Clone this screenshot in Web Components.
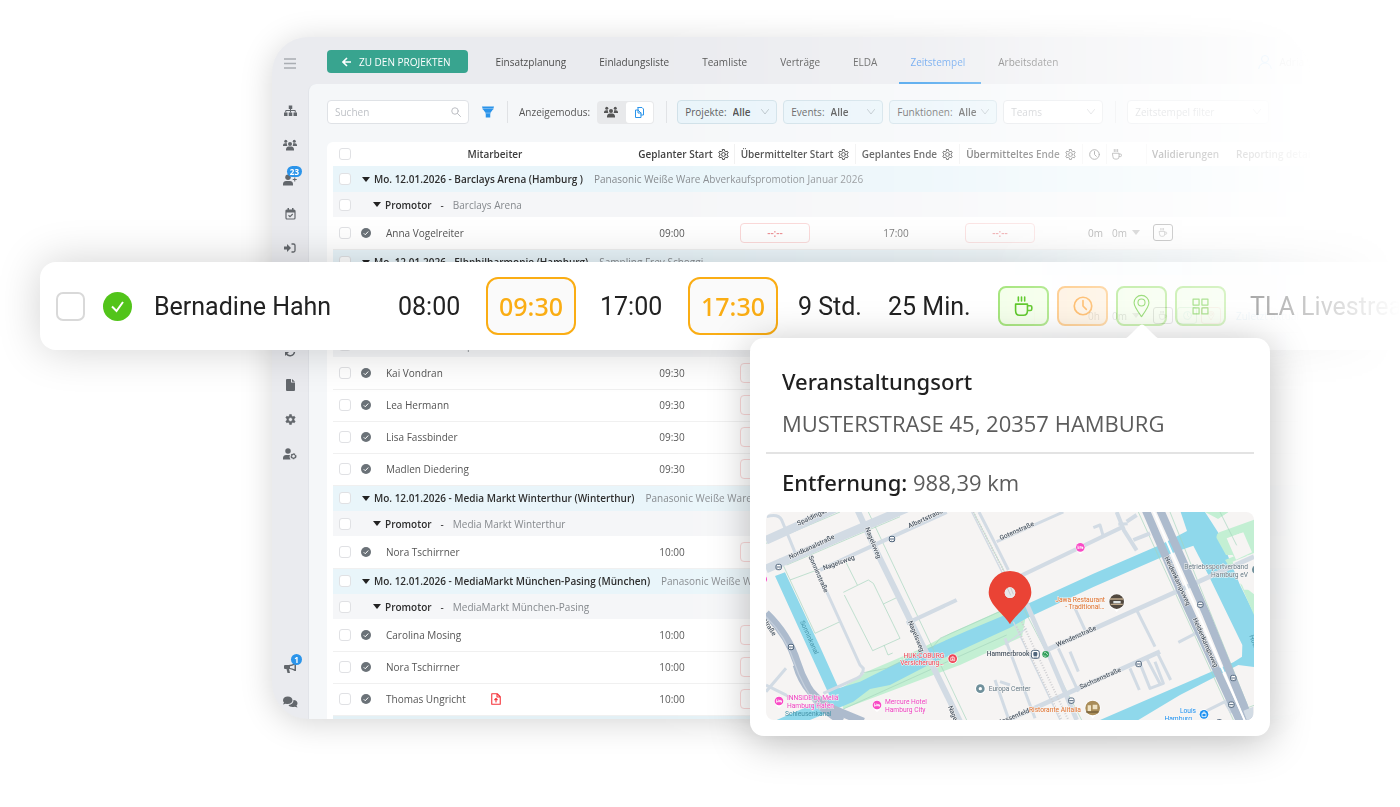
<!DOCTYPE html>
<html lang="de">
<head>
<meta charset="utf-8">
<title>Zeitstempel</title>
<style>
body{margin:0;background:#fff;font-family:"Open Sans","Noto Sans",sans-serif;font-size:10px;color:#555}
</style>
</head>
<body>
<app-stage>
  <app-window>
    <nav-rail slot="rail"></nav-rail>
    <tab-bar slot="tabs"></tab-bar>
    <filter-bar slot="filters"></filter-bar>
    <time-table></time-table>
  </app-window>
  <row-callout slot="callout"></row-callout>
  <place-popover slot="popover"><city-map></city-map></place-popover>
</app-stage>
<script>
const svg=(w,h,vb,body,extra='')=>`<svg width="${w}" height="${h}" viewBox="${vb}" aria-hidden="true" ${extra}>${body}</svg>`;
const line='fill="none" stroke="currentColor" stroke-linecap="round" stroke-linejoin="round"';
const gearTeeth='M10.3 2h3.4l.5 2.8 2 1.2 2.7-1 1.7 3-2.2 1.800v2.400l2.200 1.800-1.700 3-2.700-1-2 1.200-.5 2.800h-3.400l-.5-2.800-2-1.200-2.700 1-1.700-3 2.200-1.800V9.800L3.400 8l1.700-3 2.700 1 2-1.200z';
const I={
 menu:svg(12,11,'0 0 12 11','<path d="M0 1h12M0 5.500h12M0 10h12" stroke="#a9adb2" stroke-width="1.600"/>'),
 sitemap:svg(13,12,'0 0 26 24','<path d="M9.500 1h7v7h-7zM0 15h7v7H0zM9.500 15h7v7h-7zM19 15h7v7h-7z" fill="currentColor"/><path d="M13 7v8M3.500 15v-4h19v4" fill="none" stroke="currentColor" stroke-width="2"/>'),
 users:svg(14,12,'0 0 28 24','<g fill="currentColor"><circle cx="14" cy="10" r="4"/><circle cx="5.500" cy="4.500" r="3"/><circle cx="22.500" cy="4.500" r="3"/><path d="M6 23v-2c0-4 3-6 5-6h6c2 0 5 2 5 6v2zM0 13c0-3 2-4.500 4-4.500h4c-.5 2 0 4 1 5.500H0zM28 13c0-3-2-4.500-4-4.500h-4c.5 2 0 4-1 5.500h9z"/></g>'),
 userplus:svg(14,12,'0 0 28 24','<g fill="currentColor"><circle cx="10" cy="6.500" r="5.500"/><path d="M0 23v-3c0-4 3-6 6-6h8c3 0 6 2 6 6v3z"/></g><path d="M23.500 7v8M19.500 11h8" stroke="currentColor" stroke-width="2"/>'),
 cal:svg(11,12,'0 0 22 24','<rect x="2" y="4" width="18" height="18" rx="2" fill="none" stroke="currentColor" stroke-width="2.400"/><path d="M2 4h18v5H2zM5 0h3v5H5zM14 0h3v5h-3z" fill="currentColor"/><path d="M7 14.500l3 3 5.500-5.500" fill="none" stroke="currentColor" stroke-width="2.200"/>'),
 signin:svg(12,10,'0 0 24 20','<path d="M0 7h6V2l8 8-8 8v-5H0z" fill="currentColor"/><path d="M15 2h4q3 0 3 3v10q0 3-3 3h-4" fill="none" stroke="currentColor" stroke-width="2.600"/>'),
 sync:svg(12,12,'0 0 24 24','<path d="M3 10a9 9 0 0 1 16-4M21 14a9 9 0 0 1-16 4" fill="none" stroke="currentColor" stroke-width="3"/><path d="M22 2v8h-8zM2 22v-8h8z" fill="currentColor"/>'),
 file:svg(9,12,'0 0 18 24','<path d="M0 2q0-2 2-2h8v7h8v15q0 2-2 2H2q-2 0-2-2zM12 0l6 5.500h-6z" fill="currentColor"/>'),
 gear:svg(11,11,'2 1 20 20',`<path fill-rule="evenodd" d="${gearTeeth}M12 7.500a3.600 3.600 0 1 0 0 7.200 3.600 3.600 0 0 0 0-7.200z" fill="currentColor" stroke="currentColor"/>`),
 usergear:svg(14,12,'0 0 28 24','<g fill="currentColor"><circle cx="10" cy="6" r="5.500"/><path d="M0 23v-3c0-4 3-6 6-6h8l-1 4 2 5z"/></g><circle cx="21" cy="16.500" r="4.500" fill="none" stroke="currentColor" stroke-width="3" stroke-dasharray="3.200 1.500"/><circle cx="21" cy="16.500" r="4" fill="none" stroke="currentColor" stroke-width="2"/>'),
 horn:svg(13,12,'0 0 26 24','<path d="M0 8q0-2 2-2h7c5 0 9-2 12-4h3v16h-3c-3-2-6-4-11-4l2 8H7L5 14H2q-2 0-2-2z" fill="currentColor"/><path d="M12 8.500q5-.5 9-3v9q-4-2-9-2.500z" fill="#eaebef"/>'),
 chat:svg(15,12,'0 0 30 24','<path d="M9.500 1C15 1 19 4 19 8.500S15 16 9.500 16c-1.500 0-3 0-4-.5L0 17l2-4C.5 11.500 0 10 0 8.500 0 4 4 1 9.500 1z" fill="currentColor"/><path d="M21 8c5 .5 8 3 8 6.500 0 1.500-.5 3-2 4.500l2 4-5.500-1.500C17 23 12 21 11 18c6-.5 10-4 10-10z" fill="currentColor"/>'),
 arrow:svg(9,10,'0 0 18 20','<path d="M18 10H3M10 2l-8 8 8 8" fill="none" stroke="currentColor" stroke-width="3.200"/>'),
 search:svg(10,10,'0 0 20 20',`<g ${line} stroke-width="1.800"><circle cx="8" cy="8" r="6.500"/><path d="M13 13l6 6"/></g>`),
 funnel:svg(12,12,'0 0 24 24','<path d="M0 1h24l-1 3.500H1zM1.500 6h21L17 13.500H7zM7.500 15h9v8h-9z" fill="#2b94ea"/><path d="M1 4h22v3H1zM7 13h10v3H7z" fill="#2b94ea" opacity=".55"/>'),
 copy:svg(9,11,'0 0 18 22',`<g ${line} stroke-width="2"><path d="M6 1h8l3 3v12h-5M6 1v5M6 6H1v15h11v-9L6 6v6h6"/></g>`),
 down:svg(8,6,'0 0 16 12',`<path d="M1 1l7 9 7-9" ${line} stroke-width="1.600"/>`),
 gearo:svg(11,11,'2 1 20 20',`<g ${line} stroke-width="1.800"><path d="${gearTeeth}"/><circle cx="12" cy="11" r="3.500"/></g>`),
 clock:svg(11,11,'0 0 24 24',`<g ${line} stroke-width="2"><circle cx="12" cy="12" r="10.500"/><path d="M12 5.500V12l4 4"/></g>`,'class="fit"'),
 cup:svg(10,11,'0 0 24 26',`<g ${line} stroke-width="2"><path d="M2 10h15v8q0 6-5 6H7q-5 0-5-6zM17 12h4q1.500 0 1.500 1.500V16q0 2-2 2H17M5.500 1v5M9.500 1v5M13.500 1v5"/></g>`,'class="fit"'),
 pin:svg(10,13,'0 0 24 32',`<g ${line} stroke-width="1.500"><path d="M12 31C7 24 1.500 17 1.500 11.500a10.500 10.500 0 0 1 21 0C22.500 17 17 24 12 31z"/><circle cx="12" cy="11" r="5"/></g>`,'class="fit"'),
 grid:svg(10,10,'0 0 24 24',`<g ${line} stroke-width="1.700"><path d="M1.500 1.500h8.500v8.500H1.500zM14 1.500h8.500v8.500H14zM1.500 14h8.500v8.500H1.500zM14 14h8.500v8.500H14z"/></g>`,'class="fit"'),
 ok:svg(10,10,'0 0 20 20','<circle cx="10" cy="10" r="10" fill="#6b7278"/><path d="M5.500 10.500l3 3 6-6.500" fill="none" stroke="#fff" stroke-width="2"/>'),
 caret:svg(8,5,'0 0 8 5','<path d="M0 0h8L4 5z" fill="currentColor"/>'),
 doc:svg(10,12,'0 0 20 24',`<g ${line} style="stroke:#f5333a" stroke-width="2.200"><path d="M1.500 1.500h11l6 6v15h-17zM12 1.500v6.500h6.500M10 18v-6M7.500 13.500L10 11l2.500 2.500"/></g>`),
 user:svg(14,14,'0 0 28 28',`<g ${line} style="stroke:#6db9f2" stroke-width="2"><circle cx="14" cy="8" r="7"/><path d="M1.500 27c1-7 6-11 12.500-11s11.500 4 12.500 11"/></g>`)
};
const check=`input[type=checkbox]{appearance:none;box-sizing:border-box;width:12px;height:12px;margin:0;border:1px solid #e0e1e4;border-radius:3px;background:#fff;display:block}`;
const define=(name,html)=>customElements.define(name,class extends HTMLElement{
  connectedCallback(){
    if(this.shadowRoot)return;
    const t=document.createElement('template');
    t.innerHTML=html;
    this.attachShadow({mode:'open'}).append(t.content.cloneNode(true));
  }
});

define('app-stage',`<style>
:host{display:block;position:relative;min-height:100vh;overflow:hidden}
.fade{padding:37px 90px 60px 272px;-webkit-mask-image:linear-gradient(90deg,#000 0,#000 46%,rgba(0,0,0,.72) 66%,rgba(0,0,0,.46) 75%,rgba(0,0,0,.25) 85%,rgba(0,0,0,.08) 91%,transparent 94%);mask-image:linear-gradient(90deg,#000 0,#000 46%,rgba(0,0,0,.72) 66%,rgba(0,0,0,.46) 75%,rgba(0,0,0,.25) 85%,rgba(0,0,0,.08) 91%,transparent 94%)}
.over{position:absolute;top:202px;left:0;right:0}
.pop{position:absolute;top:338px;left:750px}
</style>
<div class="fade"><slot></slot></div>
<div class="over"><slot name="callout"></slot></div>
<div class="pop"><slot name="popover"></slot></div>`);

define('app-window',`<style>
:host{display:grid;grid-template-columns:36px minmax(0,1fr);border-radius:36px;overflow:hidden;background:#eaebef;box-shadow:0 4px 32px rgba(0,0,0,.17)}
.main{display:flex;flex-direction:column;min-width:0}
.panel{background:#f5f7f9;border-left:1px solid #e2e4e9;border-radius:8px 0 0 0;padding-left:18px}
</style>
<slot name="rail"></slot>
<div class="main"><slot name="tabs"></slot><div class="panel"><slot name="filters"></slot><slot></slot></div></div>`);

define('nav-rail',`<style>
:host{display:flex;flex-direction:column;color:#63676c}
a,button{position:relative;display:flex;align-items:center;justify-content:center;height:34px;color:inherit;border:0;padding:0;background:none;width:100%}
button{height:52px}
.top{margin-top:5px;display:flex;flex-direction:column;justify-content:space-between;min-height:377px}
.end{margin-top:auto}
b{position:absolute;right:6px;top:3px;height:11px;min-width:11px;box-sizing:border-box;padding:0 3px;border-radius:6px;background:#2b94ea;color:#fff;font:700 8px/11px "Open Sans",sans-serif;text-align:center}
</style>
<button aria-label="Menü">${I.menu}</button>
<div class="top">
<a href="#" aria-label="Struktur">${I.sitemap}</a><a href="#" aria-label="Teams">${I.users}</a><a href="#" aria-label="Bewerber">${I.userplus}<b>23</b></a><a href="#" aria-label="Kalender">${I.cal}</a><a href="#" aria-label="Check-in">${I.signin}</a><a href="#" aria-label="Dateien">${I.file}</a><a href="#" aria-label="Termine">${I.cal}</a><a href="#" aria-label="Abgleich">${I.sync}</a><a href="#" aria-label="Dokumente">${I.file}</a><a href="#" aria-label="Einstellungen">${I.gear}</a><a href="#" aria-label="Benutzer">${I.usergear}</a>
</div>
<div class="end"><a href="#" aria-label="News">${I.horn}<b>1</b></a><a href="#" aria-label="Chat">${I.chat}</a></div>`);

define('tab-bar',`<style>
:host{display:flex;align-items:stretch;height:47px;padding-left:19px;color:#4d4d4d}
button{align-self:center;display:flex;align-items:center;gap:8px;height:23px;margin:2px 16px 0 0;padding:0 18px 0 15px;border:0;border-radius:4px;background:#38a48f;color:#fff;font:10px "Open Sans",sans-serif;white-space:nowrap}
nav{display:flex;gap:6px}
a{display:flex;align-items:center;padding:4px 16px 0 11px;color:inherit;text-decoration:none;box-sizing:border-box;border-bottom:2px solid transparent;white-space:nowrap}
a.on{color:#4b93ec;border-color:#2b94ea}
.me{margin:0 6px 0 auto;display:flex;gap:7px;align-items:center;padding-top:3px;color:#888;white-space:nowrap}
</style>
<button>${I.arrow}ZU DEN PROJEKTEN</button>
<nav><a href="#">Einsatzplanung</a><a href="#">Einladungsliste</a><a href="#">Teamliste</a><a href="#">Verträge</a><a href="#">ELDA</a><a href="#" class="on">Zeitstempel</a><a href="#">Arbeitsdaten</a></nav>
<span class="me">${I.user}Adria</span>`);

const drop=(cls,label,val)=>`<label class="box ${cls}">${label?`<span>${label}</span>`:''}<select aria-label="${label||val}"><option>${val}</option></select>${I.down}</label>`;
define('filter-bar',`<style>
:host{display:flex;align-items:center;box-sizing:border-box;height:58px;padding-bottom:2px}
svg{flex:none}
.box{box-sizing:border-box;height:24px;display:flex;align-items:center;border:1px solid #dfe2e6;border-radius:4px;background:#fff;padding:0 7px;color:#b5b8bd;white-space:nowrap;flex:none}
input,select{appearance:none;border:0;background:none;padding:0;margin:0;font:inherit;color:inherit;outline:0;min-width:0;flex:1}
input::placeholder{color:#bfc2c7;opacity:1}
.search{width:142px}
.funnel{border:0;background:none;padding:0;margin:0 13px;display:flex}
i{width:1px;height:22px;background:#e0e2e5;flex:none}
.mode{margin:0 7px 0 11px;color:#555}
.seg{display:flex;width:57px;height:23px;border-radius:4px;background:#e8e9eb;color:#555;margin-right:12px;flex:none}
.seg button{flex:1;border:0;background:none;padding:0;color:inherit;display:flex;align-items:center;justify-content:center}
.seg .on{margin:1px;border-radius:3px;background:#fff;color:#2b94ea}
.drops{display:flex;gap:6px;margin:0 12px 0 10px}
.drops .box{width:100px}
.drops .wide{width:108px}
.tint{background:#e9f4fa;border-color:#cfe0e8;color:#555}
.tint select{font-weight:600;margin-left:6px;color:#444}
.tint svg{color:#a8b4bb}
.last{width:142px;margin-left:11px}
</style>
<label class="box search"><input type="text" placeholder="Suchen" aria-label="Suchen">${I.search}</label>
<button class="funnel" aria-label="Filter">${I.funnel}</button><i></i>
<span class="mode">Anzeigemodus:</span>
<div class="seg"><button aria-label="Mitarbeiter">${I.users}</button><button class="on" aria-label="Projekte">${I.copy}</button></div><i></i>
<div class="drops">${drop('tint','Projekte:','Alle')}${drop('tint','Events:','Alle')}${drop('tint wide','Funktionen:','Alle')}${drop('','','Teams')}</div><i></i>
${drop('last','','Zeitstempel filter')}`);

const chk=l=>`<td class="c"><input type="checkbox" aria-label="${l}"></td>`;
const group=(t,p)=>`<tr class="g">${chk(t)}<td colspan="9"><div class="l">${I.caret}<b>${t}</b><span>${p}</span></div></td></tr>`;
const sub=(t,r='Promotor')=>`<tr class="s">${chk(t)}<td colspan="9"><div class="l">${I.caret}<b>${r}</b><em>-</em><span>${t}</span></div></td></tr>`;
const ti=v=>`<input type="text" value="${v}" aria-label="Übermittelte Zeit">`;
const row=(n,a,x={})=>`<tr>${chk(n||'Mitarbeiter')}<td><div class="l">${I.ok}<span class="n">${n}</span>${x.doc?I.doc:''}</div></td><td class="t">${a}</td><td>${ti(x.end?'--:--':'')}</td><td class="t">${x.end||''}</td><td>${ti(x.end?'--:--':'')}</td><td>${x.h||''}</td><td><div class="m">${x.h?`0m ${I.caret}`:''}</div></td><td><div class="v">${x.h?`<i>${I.cup}</i>`:''}${x.note?`<i class="b">${I.clock}</i><i class="r">${I.pin}</i>`:''}</div></td><td class="z">${x.note||''}</td></tr>`;
define('time-table',`<style>
:host{display:block;background:#fff;border-radius:6px 0 0 0;padding-left:6px;overflow:hidden}
svg{flex:none}
${check}
table{width:100%;border-collapse:collapse;table-layout:fixed}
th,td{padding:0;box-sizing:border-box;white-space:nowrap;text-align:left}
th{height:24px;font-weight:600;color:#3c3c3c;text-align:center}
th div{display:flex;align-items:center;justify-content:center;gap:5px;height:20px;border-right:1px solid #f0f0f0}
th .lf{justify-content:flex-start;padding-left:5px}
th .pl{border:0}
th .in{padding-left:14px}
.c{padding-left:6px}
tr{height:32px}
td{height:32px;border-bottom:1px solid #f0f0f0;color:#555}
.g td{height:26px;background:#e9f5fa;border:0}
.s td{height:25px;background:#f5f6f8;border:0}
.peek td{height:4px;background:#e3f0f5;border:0}
.g,.s,.peek,thead tr{height:auto}
.l{display:flex;align-items:center;color:#222}
.l b{font-weight:600;color:#2e2e2e}
.l span{color:#85898d}
.g .l{padding-left:5px}.g b{margin:0 11px 0 4px}
.s .l{padding-left:16px}.s b{margin:0 9px 0 4px}.s em{font-style:normal;margin-right:9px}
.l .n{color:#555;margin-left:15px;width:105px}
tr:not(.g):not(.s) .l{padding-left:4px}
.t{text-align:center;padding-right:24px}
input[type=text]{display:block;box-sizing:border-box;width:70px;height:20px;margin:0 0 0 5px;padding:0;border:1px solid #fad4d4;border-radius:4px;background:#fff;color:#ea7c80;text-align:center;font:600 10px "Open Sans",sans-serif}
td:nth-child(7),td:nth-child(8){padding-left:5px}
.m{display:flex;align-items:center;gap:5px}.m svg{opacity:.6}
.v{display:flex;gap:4px;padding-left:6px}
.v i{box-sizing:border-box;width:20px;height:17px;border:1px solid #555;border-radius:3px;display:flex;align-items:center;justify-content:center;flex:none}
.v svg{height:9px}
.v .b{border-color:#8fd1a0;color:#7cc}.v .r{border-color:#f3a0a0;color:#e66}
.z{padding-left:14px;color:#6db2d8}
</style>
<table>
<colgroup><col style="width:24px"><col style="width:276px"><col style="width:102px"><col style="width:121px"><col style="width:104px"><col style="width:123px"><col style="width:24px"><col style="width:40px"><col style="width:75px"><col></colgroup>
<thead><tr><th class="c"><input type="checkbox" aria-label="Alle auswählen"></th><th><div class="pl">Mitarbeiter</div></th><th><div>Geplanter Start ${I.gearo}</div></th><th><div>Übermittelter Start ${I.gearo}</div></th><th><div>Geplantes Ende ${I.gearo}</div></th><th><div>Übermitteltes Ende ${I.gearo}</div></th><th><div>${I.clock}</div></th><th><div class="lf">${I.cup}</div></th><th><div class="lf pl">Validierungen</div></th><th><div class="lf pl in">Reporting details</div></th></tr></thead>
<tbody>
${group('Mo. 12.01.2026 - Barclays Arena (Hamburg )','Panasonic Weiße Ware Abverkaufspromotion Januar 2026')}
${sub('Barclays Arena')}
${row('Anna Vogelreiter','09:00',{end:'17:00',h:'0m'})}
${group('Mo. 12.01.2026 - Elbphilharmonie (Hamburg)','Sampling Frey Schoggi')}
${sub('')}
${row('','',{h:'0h',note:'Zuletzt aktual…'})}
${sub('Elbphilharmonie')}
${row('Kai Vondran','09:30')}
${row('Lea Hermann','09:30')}
${row('Lisa Fassbinder','09:30')}
${row('Madlen Diedering','09:30')}
${group('Mo. 12.01.2026 - Media Markt Winterthur (Winterthur)','Panasonic Weiße Ware')}
${sub('Media Markt Winterthur')}
${row('Nora Tschirrner','10:00')}
${group('Mo. 12.01.2026 - MediaMarkt München-Pasing (München)','Panasonic Weiße Ware')}
${sub('MediaMarkt München-Pasing')}
${row('Carolina Mosing','10:00')}
${row('Nora Tschirrner','10:00')}
${row('Thomas Ungricht','10:00',{doc:1})}
<tr class="peek"><td colspan="10"></td></tr>
</tbody></table>`);

define('row-callout',`<style>
:host{display:block;padding:60px 0 60px 40px;-webkit-mask-image:linear-gradient(90deg,#000 71%,rgba(0,0,0,.62) 79%,rgba(0,0,0,.4) 89%,transparent 100%);mask-image:linear-gradient(90deg,#000 71%,rgba(0,0,0,.62) 79%,rgba(0,0,0,.4) 89%,transparent 100%)}
.row{display:grid;grid-template-columns:47px 51px 244px 88px 114px 88px 110px 90px 110px 252px 1fr;align-items:center;height:88px;padding-left:16px;border-radius:16px 0 0 16px;background:#fff;box-shadow:0 0 44px rgba(0,0,0,.18);font:25px Roboto,sans-serif;color:#222;white-space:nowrap}
${check}
input[type=checkbox]{width:29px;height:29px;border:2px solid #d9d9d9;border-radius:7px}
input[type=text]{box-sizing:border-box;width:90px;height:58px;margin:0;padding:0;border:2px solid #faad14;border-radius:12px;background:#fafafa;color:#faad14;text-align:center;font:500 25px "Noto Sans",sans-serif}
.b{display:flex;gap:8px}
button{box-sizing:border-box;width:51px;height:40px;padding:0;border:2px solid #a5e57c;border-radius:8px;background:#f4ffea;color:#52c41a;display:flex;align-items:center;justify-content:center}
button .fit{width:20px;height:22px}
.o{border-color:#ffc478;background:#fff1de;color:#ffa940}
.p .fit{width:17px;height:24px}.g .fit{width:17px;height:17px}.c .fit{width:19px;height:23px}
.last{overflow:hidden;min-width:0}
</style>
<div class="row"><input type="checkbox" aria-label="Bernadine Hahn">${svg(29,29,'0 0 29 29','<circle cx="14.500" cy="14.500" r="14.500" fill="#52c41a"/><path d="M9 14.500l4.500 4.500 6.500-9" fill="none" stroke="#fff" stroke-width="2"/>')}<span>Bernadine Hahn</span><span>08:00</span><input type="text" value="09:30" aria-label="Übermittelter Start"><span>17:00</span><input type="text" value="17:30" aria-label="Übermitteltes Ende"><span>9 Std.</span><span>25 Min.</span>
<div class="b"><button class="c" aria-label="Pause">${I.cup}</button><button class="o" aria-label="Zeit">${I.clock}</button><button class="p" aria-label="Ort">${I.pin}</button><button class="g" aria-label="Formulare">${I.grid}</button></div><span class="last">TLA Livestream</span></div>`);

define('place-popover',`<style>
:host{display:block;position:relative;box-sizing:border-box;width:520px;padding:16px;border-radius:14px;background:#fff;box-shadow:0 6px 40px rgba(0,0,0,.26);font:22px/30px "Open Sans",sans-serif;color:#5c5c5c}
.tip{position:absolute;left:370px;top:-14px}
h2,p{margin:0;padding:0 16px;font-size:22px;line-height:30px;white-space:nowrap}
h2,b{font-weight:500;color:#1f1f1f;font-family:"Noto Sans",sans-serif}
h2{padding-top:12px}
.a{padding-top:12px;padding-bottom:14px;border-bottom:2px solid #e3e3e3}
.d{padding-top:13px;padding-bottom:15px}
</style>
${svg(44,15,'0 0 44 15','<path d="M0 15c6 0 8-2 11-5l8-8q3-3 6 0l8 8c3 3 5 5 11 5z" fill="#fff"/>','class="tip"')}
<h2>Veranstaltungsort</h2><p class="a">MUSTERSTRASE 45, 20357 HAMBURG</p><p class="d"><b>Entfernung:</b> 988,39 km</p>
<slot></slot>`);

const lab=(x,y,r,t,c='')=>`<text class="${c}" transform="translate(${x} ${y}) rotate(${r})">${t}</text>`;
const stop=(x,y)=>`<g transform="translate(${x} ${y})"><rect x="-8" y="-8" width="16" height="16" rx="5" fill="#fff" stroke="#50657c" stroke-width="3"/><path d="M-6 0h12M-3 5h1M3 5h1" stroke="#50657c" stroke-width="3"/></g>`;
const bed=(x,y)=>`<g transform="translate(${x} ${y})"><path d="M-14 0a14 14 0 1 1 28 0q0 10-14 21Q-14 10-14 0z" fill="#fff"/><circle r="13" fill="#f94bc5"/><path d="M-7-5v10M-7 2H7V-1H-1V-4M7 0v5" fill="none" stroke="#fff" stroke-width="2.500"/></g>`;
define('city-map',`<style>
:host{display:block;border-radius:8px;overflow:hidden}
svg{display:block;width:100%;height:auto}
text{font:500 20px Roboto,"Noto Sans",sans-serif;fill:#4a5663;stroke:#f8f7f6;stroke-width:3px;paint-order:stroke}
.pk{fill:#f03fc0}.or{fill:#e0702c}.rd{fill:#ea4355}.gr{fill:#667a86}.bl{fill:#1a8ff0}.w{fill:#4694a8;stroke:none}
.pk,.or,.rd,.gr,.bl,.w{font-weight:400}
.e{text-anchor:end}
.r path{fill:none;stroke:#d2dbe4;stroke-linejoin:round}
.n path{fill:none;stroke:#a5d5bd;stroke-width:2}
</style>
<svg viewBox="18 21 1464 624" role="img" aria-label="Karte des Veranstaltungsorts">
<rect x="18" y="21" width="1464" height="624" fill="#f6f4f3"/>
<path d="M235 555L320 500 480 432 570 385 740 308 800 320 786 395 600 480 250 612z" fill="#c3efd3"/>
<path d="M1345 21h60l-30 20zM1370 95l112-45v100l-60 5z" fill="#c3efd3"/><path d="M1395 110q-15-18 5-25l34-14 28 50-50 20z" fill="#f6f4f3"/>
<path d="M45 213L75 202 180 425 236 550 300 530 480 440 620 378 735 330 810 293 1000 206 1205 118 1281 78 1262 21H1335L1376 85 1440 240 1482 325V486L1435 480 1260 570 1135 645H1020L1420 472 1446 455 1447 420 1345 210 1300 122 1220 150 1000 246 800 340 750 368 500 483 390 540 330 552 280 590 150 645H50L210 575z" fill="#8fd8eb"/>
<path d="M1335 21h70l-32 20zM1370 100q-3-12 8-18l104-38v26l-70 26q-12 5-6 16l22 38h-30zM1395 165l60-25 12 30-56 20z" fill="#c3efd3"/>
<path d="M1400 100l50-18 26 60-48 22z" fill="#f6f4f3"/><path d="M1440 235l42 95v-62z" fill="#c3efd3"/><path d="M1418 170l64-26v110h-30z" fill="#f6f4f3"/>
<g class="n"><path d="M60 160L165 385 240 350M90 225L185 190M18 115L240 21M80 180L420 35M325 21L620 645M250 262L325 225 340 235 420 400 338 437 253 270M258 172L292 240M370 297L410 278M372 420l12 30 14-6M300 505l80-15 140-65 20-25 190-85M250 612L520 490 540 480 740 390M640 21L965 645M1135 21L1420 645M1230 21L1462 600M1380 21l50 100M1420 625l62-24"/></g>
<g class="r">
<path stroke-width="26" d="M18 106L130 55 225 10M18 192L230 100 440 10"/>
<path stroke-width="9" d="M20 35q35-10 45 10L105 142M1075 58l28-2M190 565L290 520q20-8 20-30L300 480 150 150"/>
<path stroke-width="12" d="M180 195L360 112 560 21M440 355L590 285M735 235L1090 65M1070 21l22 55 38 60M1100 50l30-20M1120 105l50-20"/>
<path stroke-width="18" d="M290 10L345 130 600 650"/>
<path stroke-width="9" d="M657 21L705 115 745 195M710 110L910 21M1000 68l20-8 10 35"/>
<path stroke-width="14" d="M795 285L865 445 950 645M700 665L1200 440M860 435L1482 155"/>
<path stroke-width="9" d="M945 310l30 65M1130 315l55 110M895 430l60 130M930 440l25 60M1110 490l28 65M1140 475l30 75 40-15-25-65M1160 460l42 80M1190 440l42 85M1255 412l62-32M1335 620l60-30 20 35M705 525l40 115M735 400l90 240M720 530l30 10M18 560l60-70M18 540l80 40"/>
<path stroke-width="4" d="M760 350L900 645M735 420L800 370M635 21L740 230"/>
</g>
<path d="M640 21L735 205M785 350L925 645M770 365L905 645" fill="none" stroke="#cfcfd2" stroke-width="6" stroke-dasharray="3 5"/>
<path d="M18 325Q85 390 110 470T190 610L245 650M110 480Q135 570 225 615L310 650" fill="none" stroke="#adbbcd" stroke-width="24"/>
<path d="M18 335Q78 395 102 470T180 615" fill="none" stroke="#c5cfdc" stroke-width="4"/>
<path d="M1155 10L1280 300 1445 660M1198 10L1340 330 1475 660" fill="none" stroke="#adbbcd" stroke-width="24"/>
<path d="M1177 10L1310 315 1460 660" fill="none" stroke="#fff" stroke-width="6"/>
<path d="M1480 655v-50l-30 12 15 40z" fill="#d2dbe4"/>
${lab(115,62,-25,'Spaldingstr.')}${lab(90,163,-25,'Nordkanalstraße')}${lab(448,70,-25,'Albertstraße')}${lab(192,196,-20,'Nagelsweg')}${lab(315,70,68,'Nagelsweg')}${lab(145,155,66,'Sonninstraße')}${lab(444,350,68,'Nagelsweg')}${lab(564,605,68,'Nagelsweg')}${lab(120,350,66,'Sonninkanal','w')}${lab(75,633,0,'Schleusenkanal','w')}${lab(8,345,58,'straße')}
${lab(722,106,-24,'Gotenstraße')}${lab(892,426,-24,'Wendenstraße')}${lab(962,553,-24,'Sachsenstraße')}${lab(715,660,-22,'Hossenfeld')}${lab(1213,158,65,'Heidenkampsweg')}${lab(1298,342,66,'Heidenkampsweg')}${lab(1468,392,70,'Hochwasser','w')}
${stop(396,102)}${stop(56,186)}${stop(93,426)}${stop(1321,299)}${stop(1136,477)}${stop(1420,519)}${stop(1414,599)}${stop(934,587)}${stop(1378,652)}
${bed(57,588)}${bed(351,600)}${bed(961,127)}${bed(8,223)}
${lab(81,585,0,'INNSiDE by Meliá','pk')}${lab(81,609,0,'Hamburg Hafen','pk')}${lab(375,596,0,'Mercure Hotel','pk')}${lab(375,620,0,'Hamburg City','pk')}
${lab(553,458,0,'HUK-COBURG','rd e')}${lab(551,481,0,'Versicherung…','rd e')}
<g transform="translate(578 461)"><circle r="15" fill="#fff"/><circle r="13" fill="#ee4455"/><path d="M-6-3h12v9H-6zM-3-6h6M0-1v5M-3 2h6" fill="none" stroke="#fff" stroke-width="2"/></g>
<g transform="translate(661 551)"><circle r="16" fill="#fff"/><circle r="13" fill="#70909b"/><circle r="5" fill="#fff"/></g>${lab(686,559,0,'Europa Center','gr')}
${lab(680,453,0,'Hammerbrook')}
<g transform="translate(826 448)"><rect x="-12" y="-12" width="24" height="24" rx="7" fill="#fff" stroke="#50657c" stroke-width="3"/><rect x="-6" y="-7" width="12" height="12" rx="3" fill="#50657c"/><path d="M-5 8h10" stroke="#50657c" stroke-width="2"/></g>
<circle cx="857" cy="448" r="10" fill="#2e9e58"/><path d="M852 444q5-4 7 0t5 6M850 450q4 6 9 3" fill="none" stroke="#fff" stroke-width="2"/>
${lab(1035,290,0,'Jawa Restaurant','or e')}${lab(1033,313,0,'- Traditional…','or e')}
<g transform="translate(1070 290)"><path d="M-24 0h48L0 32z" fill="#fff"/><circle r="24" fill="#fff"/><circle r="22" fill="#51483f"/><path d="M-20-8h40M-18 8h36" stroke="#bfa88a" stroke-width="4"/><path d="M-10-2h22v7h-22z" fill="#dfe4e4"/></g>
${lab(963,621,0,'Ristorante Alitalia','or e')}
<g transform="translate(998 609)"><path d="M-24 0h48L0 32z" fill="#fff"/><circle r="24" fill="#fff"/><circle r="22" fill="#a98c58"/><path d="M-15-8h10v18h-10zM0-10h14v14H0z" fill="#f0e3c4"/><path d="M-20 12h38" stroke="#5e4a2a" stroke-width="3"/></g>
${lab(1308,624,0,'Louis','bl e')}${lab(1296,647,0,'Hamburg','bl e')}
<g transform="translate(1332 628)"><circle r="15" fill="#fff"/><circle r="13" fill="#1a8ff0"/><path d="M-6-3H6V7H-6zM-3-3q0-5 3-5t3 5" fill="none" stroke="#fff" stroke-width="2.500"/></g>
${lab(1464,192,0,'Betriebssportverband','gr e')}${lab(1464,215,0,'Hamburg eV','gr e')}<circle cx="1489" cy="194" r="13" fill="#70909b"/>
<path fill-rule="evenodd" d="M750 358C735 330 686 300 686 262a64 64 0 0 1 128 0C814 300 765 330 750 358zM750 247a16 16 0 1 0 0 32 16 16 0 0 0 0-32z" fill="#ea4335"/>
<circle cx="750" cy="263" r="16" fill="#e9e8e9"/><path d="M742 249l10 22M752 248l8 20" stroke="#b9bcc0" stroke-width="2"/>
</svg>`);
</script>
</body>
</html>
